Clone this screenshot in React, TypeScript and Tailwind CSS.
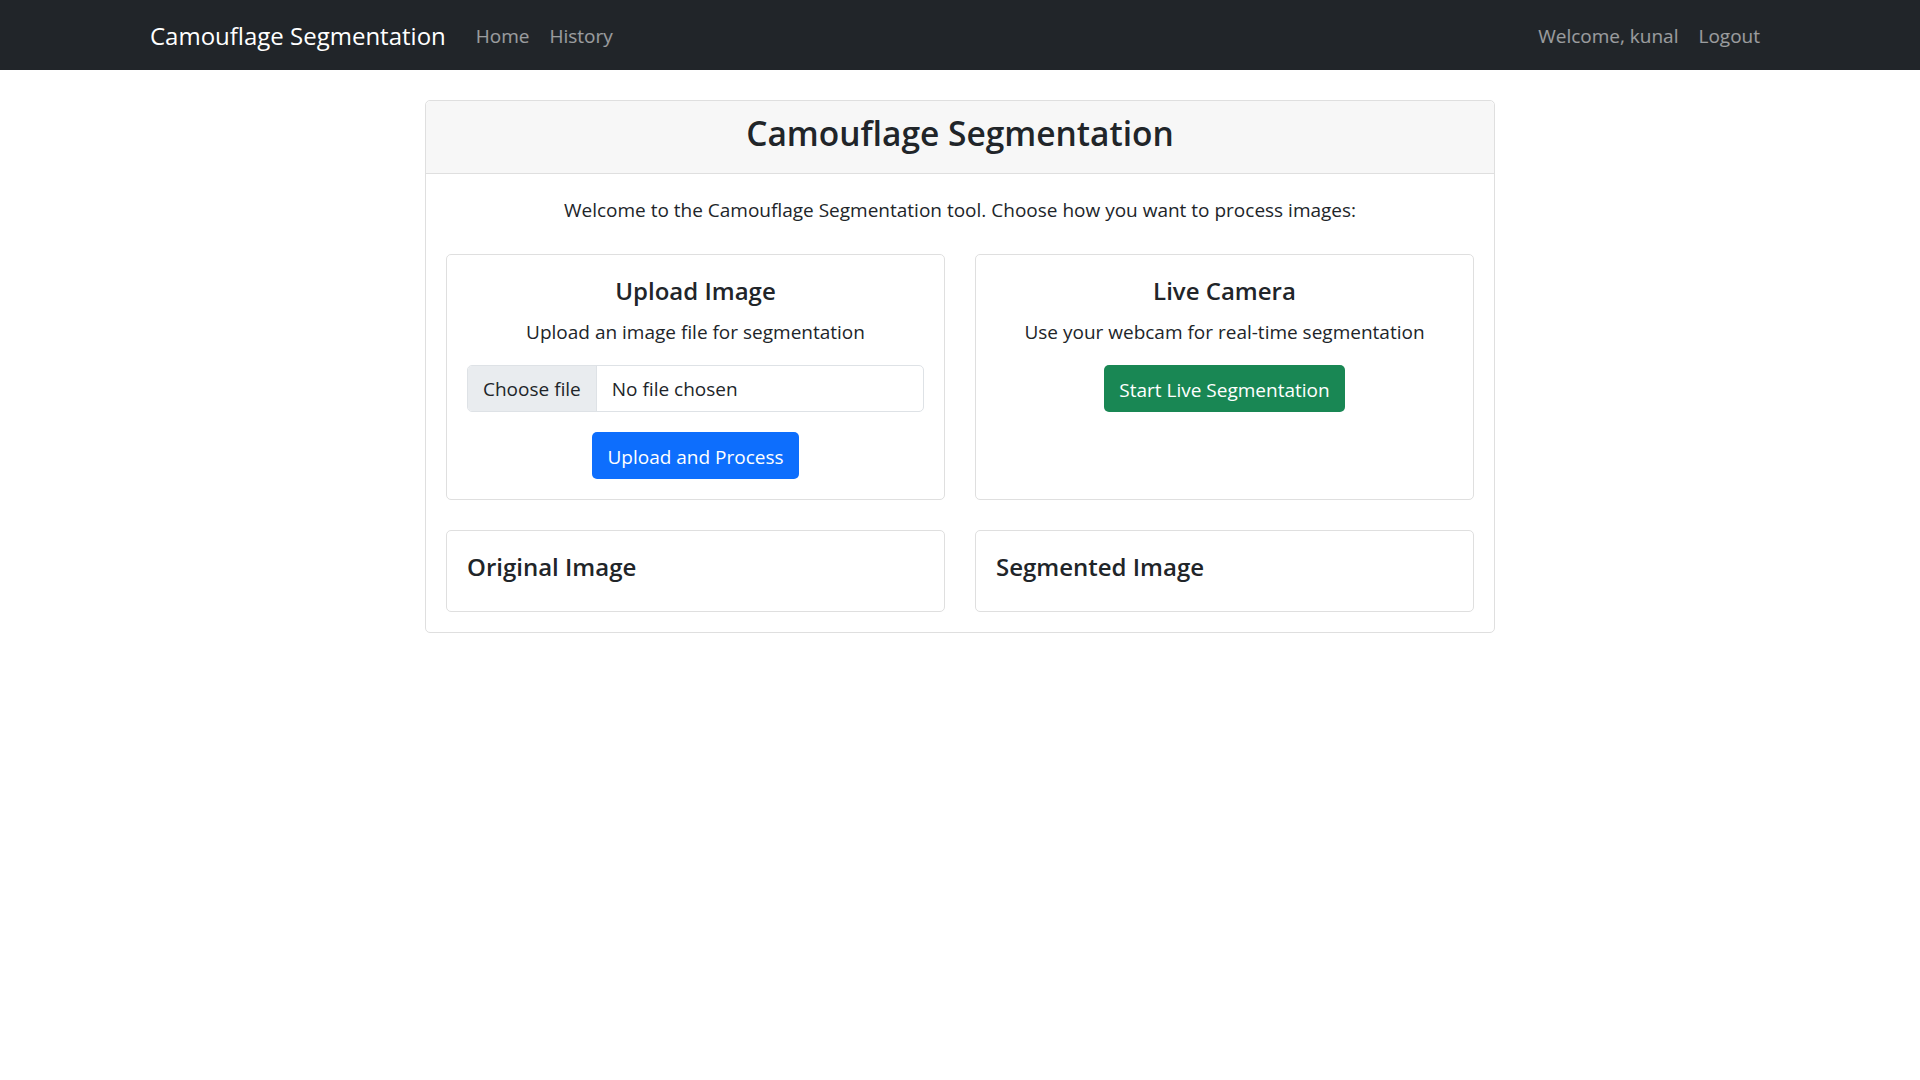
import React from "react";

export default function App() {
  return (
    <div className="min-h-[1080px] bg-white font-['Open_Sans',sans-serif] text-[#212529]">
      <nav className="h-[70px] bg-[#212529]">
        <div className="mx-auto flex h-full w-[1620px] items-center pt-[2px]">
          <span className="mr-[20px] text-[24px] leading-[38px] text-white">Camouflage Segmentation</span>
          <a className="px-[10px] text-[19px] text-white/55">Home</a>
          <a className="px-[10px] text-[19px] text-white/55">History</a>
          <div className="ml-auto flex items-center">
            <span className="px-[10px] text-[19px] text-white/55">Welcome, kunal</span>
            <a className="px-[10px] text-[19px] text-white/55">Logout</a>
          </div>
        </div>
      </nav>

      <div className="mx-auto mt-[30px] w-[1070px] rounded-[5px] border border-[#dfdfdf]">
        <div className="rounded-t-[5px] border-b border-[#dfdfdf] bg-[#f7f7f7] px-[20px] pt-[11px] pb-[9px] text-center">
          <h3 className="mb-[10px] text-[33.5px] font-semibold leading-[42px]">Camouflage Segmentation</h3>
        </div>
        <div className="p-[20px]">
          <p className="mb-[29px] pt-[1px] text-center text-[19px] leading-[30px]">
            Welcome to the Camouflage Segmentation tool. Choose how you want to process images:
          </p>
          <div className="grid grid-cols-2 gap-x-[30px]">
            <div className="rounded-[5px] border border-[#dfdfdf] p-[20px] text-center">
              <h5 className="mb-[9px] pt-[1px] text-[24px] font-semibold leading-[30px]">Upload Image</h5>
              <p className="mb-[18px] pt-[2px] text-[19px] leading-[30px]">Upload an image file for segmentation</p>
              <div className="mb-[20px] flex h-[47px] overflow-hidden rounded-[5px] border border-[#dee2e6] pt-[2px] text-left text-[19px]">
                <div className="-mt-[2px] flex items-center border-r border-[#dee2e6] bg-[#e9ecef] px-[15px] pt-[2px]">Choose file</div>
                <div className="flex items-center px-[15px]">No file chosen</div>
              </div>
              <button className="h-[47px] rounded-[5px] bg-[#0d6efd] px-[15px] pt-[3px] text-[19px] text-white">Upload and Process</button>
            </div>
            <div className="rounded-[5px] border border-[#dfdfdf] p-[20px] text-center">
              <h5 className="mb-[9px] pt-[1px] text-[24px] font-semibold leading-[30px]">Live Camera</h5>
              <p className="mb-[18px] pt-[2px] text-[19px] leading-[30px]">Use your webcam for real-time segmentation</p>
              <button className="h-[47px] rounded-[5px] bg-[#198754] px-[15px] pt-[3px] text-[19px] text-white">Start Live Segmentation</button>
            </div>
          </div>
          <div className="mt-[30px] grid grid-cols-2 gap-x-[30px]">
            <div className="rounded-[5px] border border-[#dfdfdf] p-[20px]">
              <h5 className="mb-[9px] pt-[1px] text-[24px] font-semibold leading-[30px]">Original Image</h5>
            </div>
            <div className="rounded-[5px] border border-[#dfdfdf] p-[20px]">
              <h5 className="mb-[9px] pt-[1px] text-[24px] font-semibold leading-[30px]">Segmented Image</h5>
            </div>
          </div>
        </div>
      </div>
    </div>
  );
}
